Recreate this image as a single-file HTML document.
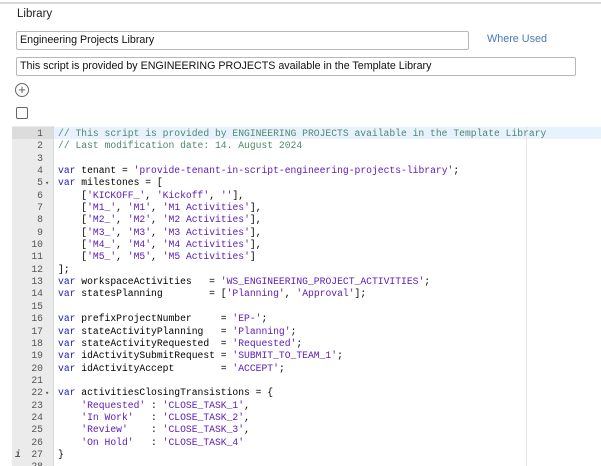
<!DOCTYPE html>
<html><head><style>
body{margin:0;width:601px;height:466px;overflow:hidden;background:#fff;font-family:"Liberation Sans",Arial,sans-serif;position:relative}
.topline{position:absolute;left:0;top:2px;width:601px;height:2px;background:#d8d8d8}
.lbl{position:absolute;left:17px;top:8px;font-size:11.5px;color:#222}
.inp{position:absolute;height:17px;border:1px solid #b8b8b8;border-radius:2px;font-size:10.7px;line-height:17px;padding-left:3px;color:#111;box-sizing:content-box}
.wu{position:absolute;left:487px;top:33px;font-size:10.8px;color:#4a7ab8}
.plus{position:absolute;left:15px;top:83px;width:12px;height:12px;border:1px solid #666;border-radius:50%;font-size:13px;line-height:12px;text-align:center;color:#555}
.cb{position:absolute;left:16px;top:107px;width:10px;height:10px;border:1px solid #666;border-radius:2px}
.ed{position:absolute;left:12px;top:126px;width:589px;height:340px;overflow:hidden}
.gut{position:absolute;left:0;top:0;width:41px;height:340px;background:#ebebeb;border-right:1px solid #d8d8d8}
.margin{position:absolute;left:514px;top:0;width:1px;height:340px;background:#e8e8e8}
.act{position:absolute;left:42px;top:1px;width:560px;height:12.35px;background:#e8f2fe}
.actg{position:absolute;left:0;top:1px;width:41px;height:12.35px;background:#dcdcdc}
pre{margin:0;position:absolute;top:2px;font-family:"Liberation Mono",monospace;font-size:9.7px;line-height:12.35px}
.nums{left:0;width:31px;text-align:right;color:#555}
.code{left:46px;color:#000}
.c{color:#4c886b}.k{color:#1b1bb8}.s{color:#5a1ab8}
</style></head><body>
<div class="topline"></div>
<div class="lbl">Library</div>
<div class="inp" style="left:16px;top:31px;width:448px">Engineering Projects Library</div>
<div class="wu">Where Used</div>
<div class="inp" style="left:16px;top:57px;width:555px">This script is provided by ENGINEERING PROJECTS available in the Template Library</div>
<div class="plus">+</div>
<div class="cb"></div>
<div class="ed">
<div class="gut"></div>
<div class="actg"></div>
<div class="act"></div>
<div class="margin"></div>
<pre class="nums">1
2
3
4
5
6
7
8
9
10
11
12
13
14
15
16
17
18
19
20
21
22
23
24
25
26
27
28</pre>
<pre style="left:33px;color:#555;font-size:7px;line-height:12.35px;top:3px">




▾
















▾</pre>
<pre style="left:3px;color:#555;font-style:italic;font-weight:bold;top:2px">


























i</pre>
<pre class="code"><span class="c">// This script is provided by ENGINEERING PROJECTS available in the Template Library
// Last modification date: 14. August 2024</span>

<span class="k">var</span> tenant = <span class="s">'provide-tenant-in-script-engineering-projects-library'</span>;
<span class="k">var</span> milestones = [
    [<span class="s">'KICKOFF_'</span>, <span class="s">'Kickoff'</span>, <span class="s">''</span>],
    [<span class="s">'M1_'</span>, <span class="s">'M1'</span>, <span class="s">'M1 Activities'</span>],
    [<span class="s">'M2_'</span>, <span class="s">'M2'</span>, <span class="s">'M2 Activities'</span>],
    [<span class="s">'M3_'</span>, <span class="s">'M3'</span>, <span class="s">'M3 Activities'</span>],
    [<span class="s">'M4_'</span>, <span class="s">'M4'</span>, <span class="s">'M4 Activities'</span>],
    [<span class="s">'M5_'</span>, <span class="s">'M5'</span>, <span class="s">'M5 Activities'</span>]
];
<span class="k">var</span> workspaceActivities   = <span class="s">'WS_ENGINEERING_PROJECT_ACTIVITIES'</span>;
<span class="k">var</span> statesPlanning        = [<span class="s">'Planning'</span>, <span class="s">'Approval'</span>];

<span class="k">var</span> prefixProjectNumber     = <span class="s">'EP-'</span>;
<span class="k">var</span> stateActivityPlanning   = <span class="s">'Planning'</span>;
<span class="k">var</span> stateActivityRequested  = <span class="s">'Requested'</span>;
<span class="k">var</span> idActivitySubmitRequest = <span class="s">'SUBMIT_TO_TEAM_1'</span>;
<span class="k">var</span> idActivityAccept        = <span class="s">'ACCEPT'</span>;

<span class="k">var</span> activitiesClosingTransistions = {
    <span class="s">'Requested'</span> : <span class="s">'CLOSE_TASK_1'</span>,
    <span class="s">'In Work'</span>   : <span class="s">'CLOSE_TASK_2'</span>,
    <span class="s">'Review'</span>    : <span class="s">'CLOSE_TASK_3'</span>,
    <span class="s">'On Hold'</span>   : <span class="s">'CLOSE_TASK_4'</span>
}
</pre>
</div>
</body></html>
